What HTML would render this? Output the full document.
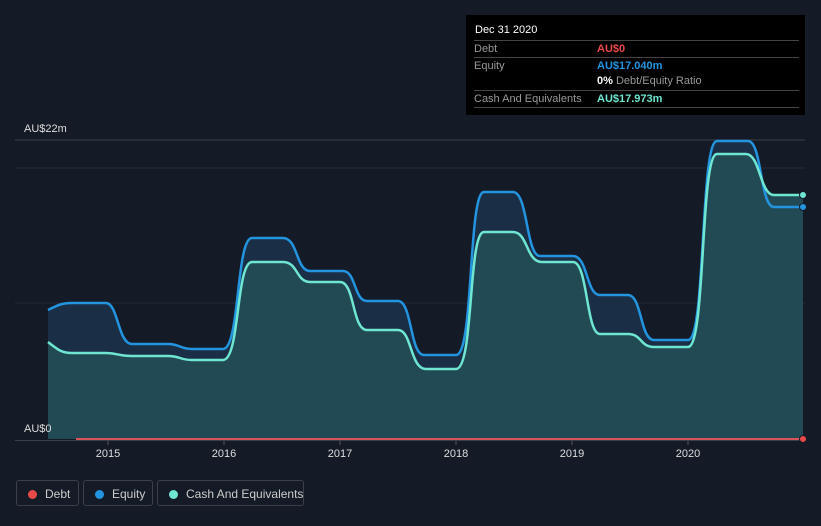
<!DOCTYPE html>
<html><head><style>
body{margin:0;width:821px;height:526px;background:#151b26;font-family:"Liberation Sans",sans-serif;overflow:hidden;position:relative}
.tt{position:absolute;left:466px;top:15px;width:339px;height:100px;background:#000;color:#fff;font-size:11px}
.row{position:absolute;left:8px;width:325px;border-top:1px solid #444;height:17px;line-height:17px;color:#999}
.lg{position:absolute;top:480px;height:26px;border:1px solid #3a3f4a;border-radius:3px;color:#ccc;font-size:12px;line-height:26px;box-sizing:border-box;white-space:nowrap}
.dot{display:inline-block;width:9px;height:9px;border-radius:50%;margin:0 8px 0 11px;vertical-align:-1px}
</style></head><body>
<svg width="821" height="526" style="position:absolute;left:0;top:0">
<line x1="15" y1="140" x2="805" y2="140" stroke="#3a404a"/>
<line x1="15" y1="168" x2="805" y2="168" stroke="#252b36"/>
<line x1="15" y1="303" x2="805" y2="303" stroke="#252b36"/>
<path d="M48,310 C58,305 62,303 72,303 L106,303 C118,303 118,344 132,344 L168,344 C180,344 180,349 192,349 L223,349 C240,349 236,238 252,238 L283,238 C298,238 296,271 310,271 L343,271 C356,271 354,301 367,301 L398,301 C412,301 410,355 424,355 L456,355 C474,355 468,192 484,192 L513,192 C528,192 526,256 540,256 L573,256 C588,256 586,295 600,295 L628,295 C642,295 640,340 654,340 L688,340 C706,340 700,141 717,141 L748,141 C762,141 760,207 774,207 L803,207 L803,439 L48,439Z" fill="#1a2f45"/>
<path d="M48,342 C58,350 62,353 72,353 L106,353 C118,353 118,356 132,356 L168,356 C180,356 180,360 192,360 L223,360 C240,360 236,262 252,262 L283,262 C298,262 296,282 310,282 L340,282 C355,282 352,330 367,330 L398,330 C412,330 410,369 426,369 L456,369 C474,369 468,232 484,232 L513,232 C528,232 526,262 542,262 L573,262 C588,262 586,334 600,334 L628,334 C642,334 640,347 654,347 L688,347 C706,347 700,154 717,154 L746,154 C760,154 760,195 774,195 L803,195 L803,439 L48,439Z" fill="#224a55"/>
<path d="M48,310 C58,305 62,303 72,303 L106,303 C118,303 118,344 132,344 L168,344 C180,344 180,349 192,349 L223,349 C240,349 236,238 252,238 L283,238 C298,238 296,271 310,271 L343,271 C356,271 354,301 367,301 L398,301 C412,301 410,355 424,355 L456,355 C474,355 468,192 484,192 L513,192 C528,192 526,256 540,256 L573,256 C588,256 586,295 600,295 L628,295 C642,295 640,340 654,340 L688,340 C706,340 700,141 717,141 L748,141 C762,141 760,207 774,207 L803,207" fill="none" stroke="#2394df" stroke-width="2.5"/>
<path d="M48,342 C58,350 62,353 72,353 L106,353 C118,353 118,356 132,356 L168,356 C180,356 180,360 192,360 L223,360 C240,360 236,262 252,262 L283,262 C298,262 296,282 310,282 L340,282 C355,282 352,330 367,330 L398,330 C412,330 410,369 426,369 L456,369 C474,369 468,232 484,232 L513,232 C528,232 526,262 542,262 L573,262 C588,262 586,334 600,334 L628,334 C642,334 640,347 654,347 L688,347 C706,347 700,154 717,154 L746,154 C760,154 760,195 774,195 L803,195" fill="none" stroke="#6ee6d2" stroke-width="2.5"/>
<line x1="76" y1="439" x2="803" y2="439" stroke="#d9535a" stroke-width="2"/>
<line x1="15" y1="440.5" x2="805" y2="440.5" stroke="#3a404a"/>
<circle cx="803" cy="195" r="3.5" fill="#6ee6d2" stroke="#151b26"/>
<circle cx="803" cy="207" r="3.5" fill="#2394df" stroke="#151b26"/>
<circle cx="803" cy="439" r="3.5" fill="#e84a4a" stroke="#151b26"/>
<g stroke="#555"><line x1="108" y1="441" x2="108" y2="445"/><line x1="224" y1="441" x2="224" y2="445"/><line x1="340" y1="441" x2="340" y2="445"/><line x1="456" y1="441" x2="456" y2="445"/><line x1="572" y1="441" x2="572" y2="445"/><line x1="688" y1="441" x2="688" y2="445"/></g>
<g fill="#ddd" font-size="11" text-anchor="middle" font-family="Liberation Sans"><text x="108" y="457">2015</text><text x="224" y="457">2016</text><text x="340" y="457">2017</text><text x="456" y="457">2018</text><text x="572" y="457">2019</text><text x="688" y="457">2020</text></g>
<text x="24" y="132" fill="#ddd" font-size="11" font-family="Liberation Sans">AU$22m</text>
<text x="24" y="432" fill="#ddd" font-size="11" font-family="Liberation Sans">AU$0</text>
</svg>
<div class="tt">
<div style="position:absolute;left:9px;top:9px">Dec 31 2020</div>
<div class="row" style="top:25px">Debt<span style="position:absolute;left:123px;color:#e84a4a;font-weight:bold">AU$0</span></div>
<div class="row" style="top:42px">Equity<span style="position:absolute;left:123px;color:#2394df;font-weight:bold">AU$17.040m</span></div>
<div class="row" style="top:58px;border-top:none"><span style="position:absolute;left:123px;color:#999"><b style="color:#fff">0%</b> Debt/Equity Ratio</span></div>
<div class="row" style="top:75px">Cash And Equivalents<span style="position:absolute;left:123px;color:#6ee6d2;font-weight:bold">AU$17.973m</span></div>
<div class="row" style="top:92px;height:0"></div>
</div>
<div class="lg" style="left:16px;width:63px"><span class="dot" style="background:#e84a4a"></span>Debt</div>
<div class="lg" style="left:83px;width:70px"><span class="dot" style="background:#2394df"></span>Equity</div>
<div class="lg" style="left:157px;width:147px"><span class="dot" style="background:#6ee6d2"></span>Cash And Equivalents</div>
</body></html>
